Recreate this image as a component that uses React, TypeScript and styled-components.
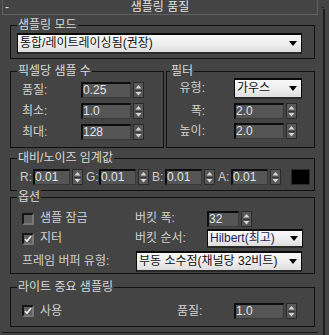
import styled, { createGlobalStyle } from "styled-components";

const GlobalStyle = createGlobalStyle`
  html, body {
    margin: 0;
    padding: 0;
    background: #444444;
  }
  body {
    font-family: "Liberation Sans", "Noto Sans CJK KR", sans-serif;
    font-size: 12px;
    color: #d0d0d0;
  }
`;

const Root = styled.div`
  display: flex;
  width: 329px;
  height: 335px;
  overflow: hidden;
  background: #444444;
`;

const Main = styled.div`
  width: 318px;
  padding-left: 2px;
  box-sizing: border-box;
  display: flex;
  flex-direction: column;
`;

// scroll rail on the right edge of the rollout
const Rail = styled.div`
  position: relative;
  width: 2px;
  margin: 9px 0 0 5px;
  background: #1e1e1e;
  &::before {
    content: "";
    position: absolute;
    top: -2px;
    left: -1px;
    width: 2px;
    height: 1px;
    background: #1e1e1e;
  }
`;

const TitleBar = styled.div`
  display: grid;
  grid-template-columns: 20px 1fr 20px;
  align-items: center;
  width: 316px;
  height: 15px;
  box-sizing: border-box;
  border: 1px solid #616161;
  border-top: none;
  color: #e2e2e2;
  line-height: 14px;
`;

const Collapse = styled.span`
  padding-left: 2px;
`;

const Title = styled.span`
  text-align: center;
`;

const Body = styled.div`
  display: flex;
  flex-direction: column;
  padding-left: 8px;
`;

const GroupRow = styled.div`
  display: flex;
  gap: 2px;
  margin-top: 12px;
`;

const Group = styled.div<{ $w?: number; $h: number; $mt?: number }>`
  position: relative;
  box-sizing: border-box;
  width: ${(p) => p.$w ?? 305}px;
  height: ${(p) => p.$h}px;
  margin-top: ${(p) => p.$mt ?? 0}px;
  border: 1px solid #111111;
`;

const Legend = styled.span<{ $x?: number }>`
  position: absolute;
  top: -8px;
  left: ${(p) => p.$x ?? 6}px;
  padding: 0 1px;
  background: #444444;
  line-height: 15px;
  color: #d8d8d8;
  white-space: nowrap;
`;

const Label = styled.span<{ $right?: boolean }>`
  line-height: 15px;
  white-space: nowrap;
  justify-self: ${(p) => (p.$right ? "end" : "start")};
`;

const Select = styled.div<{ $w: number; $h?: number; $ink?: string }>`
  display: flex;
  align-items: center;
  justify-content: space-between;
  width: ${(p) => p.$w}px;
  height: ${(p) => p.$h ?? 21}px;
  box-sizing: border-box;
  padding: 0 4px 0 2px;
  border: 1px solid #0a0a0a;
  border-top-width: 2px;
  border-bottom: 2px solid #2a2a2a;
  background: linear-gradient(#f8f8f8, #efefef 50%, #dddddd);
  color: ${(p) => p.$ink ?? "#111111"};
  line-height: 15px;
  white-space: nowrap;
  overflow: hidden;
`;

const Field = styled.div<{ $w: number }>`
  width: ${(p) => p.$w}px;
  height: 16px;
  box-sizing: border-box;
  border-top: 2px solid #0d0d0d;
  border-left: 2px solid #0d0d0d;
  border-right: 1px solid #393939;
  border-bottom: 1px solid #393939;
  background: #555555;
  color: #dfe5ee;
  line-height: 13px;
  white-space: nowrap;
`;

const SpinBox = styled.div`
  display: flex;
  align-items: center;
  justify-content: center;
  width: 11px;
  height: 16px;
  box-sizing: border-box;
  border: 1px solid #2a2a2a;
  background: #585858;
`;

const SpinField = styled.div`
  display: flex;
  align-items: center;
  gap: 2px;
`;

const CheckItem = styled.div<{ $w?: number }>`
  display: flex;
  align-items: center;
  gap: 6px;
  width: ${(p) => (p.$w ? `${p.$w}px` : "auto")};
`;

const Box = styled.span`
  display: flex;
  align-items: center;
  justify-content: center;
  width: 12px;
  height: 12px;
  box-sizing: border-box;
  border: 2px solid #151515;
  border-right-color: #777777;
  border-bottom-color: #777777;
  background: #5d5d5d;
`;

const ModeBody = styled.div`
  padding: 7px 0 0 6px;
`;

const ParamGrid = styled.div`
  display: grid;
  grid-template-columns: 59px auto;
  grid-auto-rows: 16px;
  row-gap: 5px;
  align-items: center;
  padding: 10px 0 0 11px;
`;

const FilterGrid = styled.div`
  display: grid;
  grid-template-columns: 38px auto;
  grid-template-rows: 21px 16px 16px;
  column-gap: 29px;
  row-gap: 4px;
  align-items: center;
  padding-top: 6px;
`;

const ChannelRow = styled.div`
  display: flex;
  align-items: center;
  gap: 3px;
  padding: 10px 0 0 9px;
`;

const Channel = styled.div`
  display: flex;
  align-items: center;
`;

const ChannelLabel = styled.span`
  width: 13px;
  line-height: 15px;
  color: #c8ccd2;
`;

const Swatch = styled.div`
  width: 19px;
  height: 16px;
  margin-left: 7px;
  box-sizing: border-box;
  border: 1px solid #2a2a2a;
  background: #000000;
`;

const OptionsGrid = styled.div`
  display: grid;
  grid-template-columns: 113px 72px auto;
  grid-template-rows: 15px 19px 21px;
  row-gap: 3px;
  align-items: center;
  padding: 13px 0 0 11px;
`;

const WideSelect = styled(Select)`
  grid-column: 2 / 4;
  margin-left: 1px;
`;

const LightRow = styled.div`
  display: flex;
  align-items: center;
  height: 16px;
  padding: 15px 0 0 11px;
`;

const LightLabel = styled.span`
  width: 57px;
  line-height: 15px;
`;

const BottomRule = styled.div`
  width: 316px;
  height: 1px;
  margin-top: 5px;
  background: #1a1a1a;
`;

const Caret = () => (
  <svg width="8" height="5" viewBox="0 0 8 5">
    <path d="M0 0h8L4 5z" fill="#000" />
  </svg>
);

const Spinner = () => (
  <SpinBox>
    <svg width="9" height="14" viewBox="0 0 9 14">
      <path d="M4.5 2L7.5 5.5H1.5z" fill="#d6d6d6" />
      <path d="M1 7.5h7" stroke="#333" />
      <path d="M1.5 9h6L4.5 12.5z" fill="#d6d6d6" />
    </svg>
  </SpinBox>
);

const Check = ({ on }: { on?: boolean }) => (
  <Box>
    {on && (
      <svg width="8" height="8" viewBox="0 0 8 8">
        <path d="M1 4l2 2.2L7 1" stroke="#f2f2f2" strokeWidth="1.6" fill="none" />
      </svg>
    )}
  </Box>
);

const Num = ({ w, value }: { w: number; value: string }) => (
  <SpinField>
    <Field $w={w}>{value}</Field>
    <Spinner />
  </SpinField>
);

const channels = [
  { k: "R:", v: "0.01" },
  { k: "G:", v: "0.01" },
  { k: "B:", v: "0.01" },
  { k: "A:", v: "0.01" },
];

export default function App() {
  return (
    <>
      <GlobalStyle />
      <Root>
        <Main>
          <TitleBar>
            <Collapse>-</Collapse>
            <Title>샘플링 품질</Title>
            <span />
          </TitleBar>

          <Body>
            <Group $h={34} $mt={10}>
              <Legend>샘플링 모드</Legend>
              <ModeBody>
                <Select $w={285}>
                  <span>통합/레이트레이싱됨(권장)</span>
                  <Caret />
                </Select>
              </ModeBody>
            </Group>

            <GroupRow>
              <Group $w={154} $h={77}>
                <Legend>픽셀당 샘플 수</Legend>
                <ParamGrid>
                  <Label>품질:</Label>
                  <Num w={50} value="0.25" />
                  <Label>최소:</Label>
                  <Num w={50} value="1.0" />
                  <Label>최대:</Label>
                  <Num w={50} value="128" />
                </ParamGrid>
              </Group>
              <Group $w={149} $h={77}>
                <Legend $x={3}>필터</Legend>
                <FilterGrid>
                  <Label $right>유형:</Label>
                  <Select $w={68}>
                    <span>가우스</span>
                    <Caret />
                  </Select>
                  <Label $right>폭:</Label>
                  <Num w={50} value="2.0" />
                  <Label $right>높이:</Label>
                  <Num w={50} value="2.0" />
                </FilterGrid>
              </Group>
            </GroupRow>

            <Group $h={33} $mt={10}>
              <Legend>대비/노이즈 임계값</Legend>
              <ChannelRow>
                {channels.map((c) => (
                  <Channel key={c.k}>
                    <ChannelLabel>{c.k}</ChannelLabel>
                    <Num w={37} value={c.v} />
                  </Channel>
                ))}
                <Swatch />
              </ChannelRow>
            </Group>

            <Group $h={77} $mt={6}>
              <Legend>옵션</Legend>
              <OptionsGrid>
                <CheckItem>
                  <Check />
                  <Label>샘플 잠금</Label>
                </CheckItem>
                <Label>버킷 폭:</Label>
                <Num w={32} value="32" />
                <CheckItem>
                  <Check on />
                  <Label>지터</Label>
                </CheckItem>
                <Label>버킷 순서:</Label>
                <Select $w={96} $h={19} $ink="#1c1f55">
                  <span>Hilbert(최고)</span>
                  <Caret />
                </Select>
                <Label>프레임 버퍼 유형:</Label>
                <WideSelect $w={166}>
                  <span>부동 소수점(채널당 32비트)</span>
                  <Caret />
                </WideSelect>
              </OptionsGrid>
            </Group>

            <Group $h={40} $mt={13}>
              <Legend>라이트 중요 샘플링</Legend>
              <LightRow>
                <CheckItem $w={155}>
                  <Check on />
                  <Label>사용</Label>
                </CheckItem>
                <LightLabel>품질:</LightLabel>
                <Num w={50} value="1.0" />
              </LightRow>
            </Group>
          </Body>
          <BottomRule />
        </Main>
        <Rail />
      </Root>
    </>
  );
}
